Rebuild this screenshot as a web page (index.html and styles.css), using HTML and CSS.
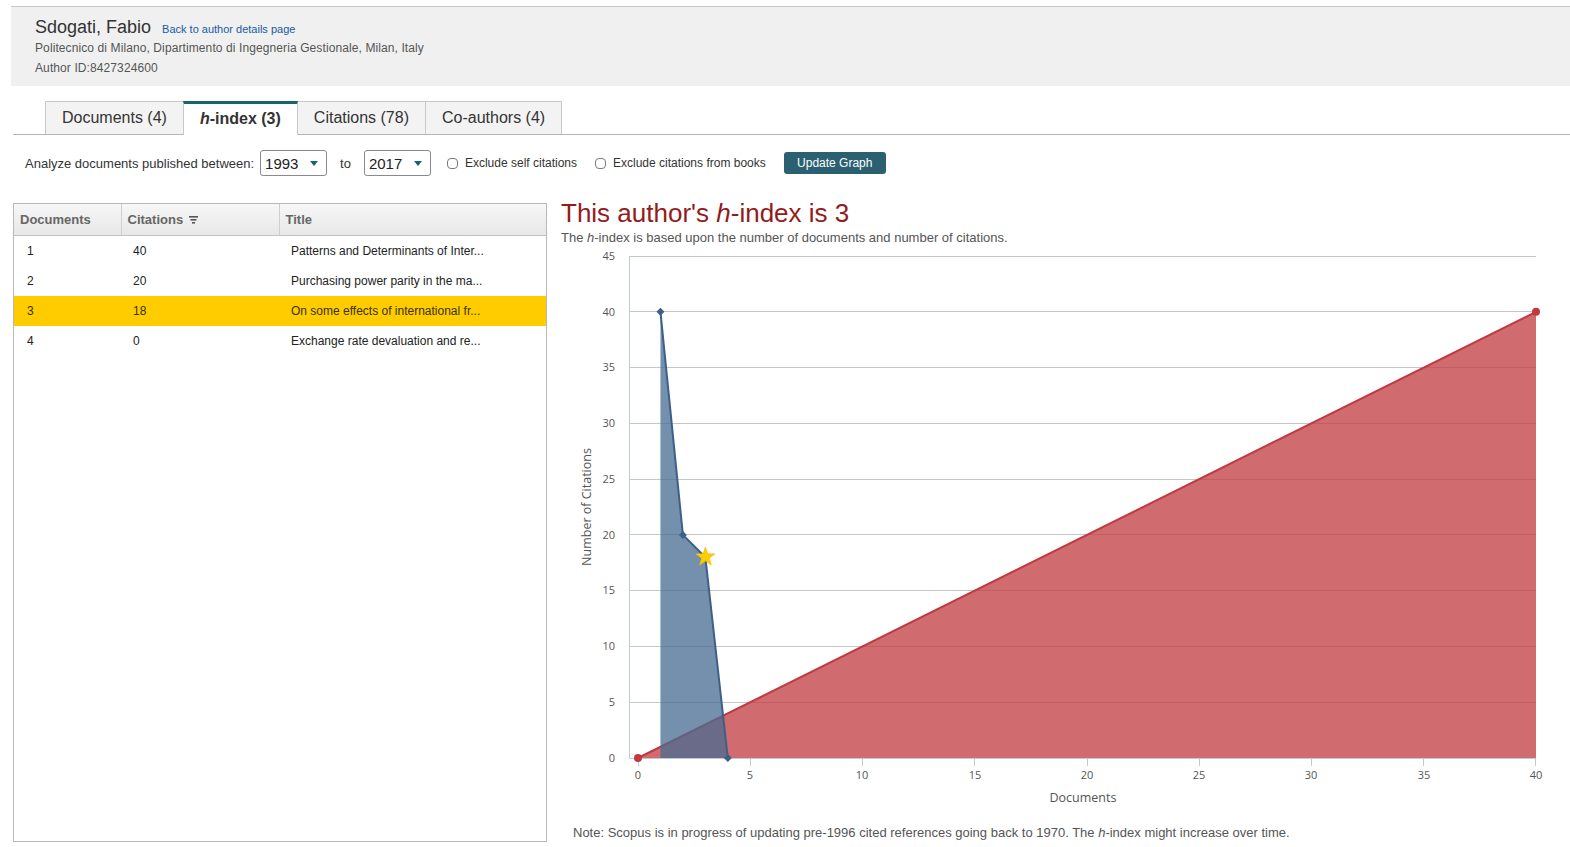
FILE: index.html
```html
<!DOCTYPE html>
<html lang="en">
<head>
  <meta charset="UTF-8">
  <title>Author h-index</title>
  <link rel="stylesheet" href="styles.css">
</head>
<body>
  <!-- Author header -->
  <div class="author-header">
    <div class="author-name">Sdogati, Fabio <a href="#" class="back-link">Back to author details page</a></div>
    <div class="author-line">Politecnico di Milano, Dipartimento di Ingegneria Gestionale, Milan, Italy</div>
    <div class="author-line">Author ID:8427324600</div>
  </div>

  <!-- Tabs -->
  <div class="tabs">
    <div class="tab">Documents (4)</div>
    <div class="tab active"><i>h</i>-index (3)</div>
    <div class="tab">Citations (78)</div>
    <div class="tab">Co-authors (4)</div>
  </div>

  <!-- Filters -->
  <div class="controls">
    <span class="ctl-label">Analyze documents published between:</span>
    <span class="year-select">1993<span class="caret"></span></span>
    <span class="ctl-to">to</span>
    <span class="year-select">2017<span class="caret"></span></span>
    <label class="check first"><input type="checkbox"> Exclude self citations</label>
    <label class="check"><input type="checkbox"> Exclude citations from books</label>
    <button class="update-btn">Update Graph</button>
  </div>

  <div class="main">
    <!-- Document list -->
    <div class="doc-panel">
      <table class="doc-table">
        <colgroup>
          <col class="col-doc">
          <col class="col-cit">
          <col>
        </colgroup>
        <thead>
          <tr>
            <th>Documents</th>
            <th>Citations <svg class="sort-icon" width="9" height="8" viewBox="0 0 9 8"><rect x="0" y="0" width="9" height="1.6" fill="#555"/><rect x="1.5" y="3" width="6" height="1.6" fill="#555"/><rect x="3" y="6" width="3" height="1.6" fill="#555"/></svg></th>
            <th>Title</th>
          </tr>
        </thead>
        <tbody>
          <tr><td>1</td><td>40</td><td>Patterns and Determinants of Inter...</td></tr>
          <tr><td>2</td><td>20</td><td>Purchasing power parity in the ma...</td></tr>
          <tr class="highlight"><td>3</td><td>18</td><td>On some effects of international fr...</td></tr>
          <tr><td>4</td><td>0</td><td>Exchange rate devaluation and re...</td></tr>
        </tbody>
      </table>
    </div>

    <!-- Graph -->
    <div class="graph-col">
      <h2 class="graph-title">This author's <i>h</i>-index is 3</h2>
      <p class="graph-sub">The <i>h</i>-index is based upon the number of documents and number of citations.</p>
      <svg class="chart" width="1012" height="565" viewBox="0 0 1012 565">
        <!-- grid -->
        <g stroke="#c6c6c6" stroke-width="1">
          <line x1="71" y1="10.5" x2="978" y2="10.5"/>
          <line x1="71" y1="65.5" x2="978" y2="65.5"/>
          <line x1="71" y1="121.5" x2="978" y2="121.5"/>
          <line x1="71" y1="177.5" x2="978" y2="177.5"/>
          <line x1="71" y1="233.5" x2="978" y2="233.5"/>
          <line x1="71" y1="288.5" x2="978" y2="288.5"/>
          <line x1="71" y1="344.5" x2="978" y2="344.5"/>
          <line x1="71" y1="400.5" x2="978" y2="400.5"/>
          <line x1="71" y1="456.5" x2="978" y2="456.5"/>
        </g>
        <line x1="71.5" y1="10" x2="71.5" y2="512" stroke="#c0cad6"/>
        <line x1="71" y1="512.5" x2="978" y2="512.5" stroke="#c0cad6"/>
        <g stroke="#c0cad6">
          <line x1="80.5" y1="512" x2="80.5" y2="520"/>
          <line x1="192.5" y1="512" x2="192.5" y2="520"/>
          <line x1="304.5" y1="512" x2="304.5" y2="520"/>
          <line x1="416.5" y1="512" x2="416.5" y2="520"/>
          <line x1="529.5" y1="512" x2="529.5" y2="520"/>
          <line x1="641.5" y1="512" x2="641.5" y2="520"/>
          <line x1="753.5" y1="512" x2="753.5" y2="520"/>
          <line x1="865.5" y1="512" x2="865.5" y2="520"/>
          <line x1="977.5" y1="512" x2="977.5" y2="520"/>
        </g>

        <!-- y labels -->
        <g class="tick" text-anchor="end">
          <text x="57" y="14">45</text>
          <text x="57" y="70">40</text>
          <text x="57" y="125">35</text>
          <text x="57" y="181">30</text>
          <text x="57" y="237">25</text>
          <text x="57" y="293">20</text>
          <text x="57" y="348">15</text>
          <text x="57" y="404">10</text>
          <text x="57" y="460">5</text>
          <text x="57" y="516">0</text>
        </g>
        <!-- x labels -->
        <g class="tick" text-anchor="middle">
          <text x="80" y="533">0</text>
          <text x="192" y="533">5</text>
          <text x="304" y="533">10</text>
          <text x="417" y="533">15</text>
          <text x="529" y="533">20</text>
          <text x="641" y="533">25</text>
          <text x="753" y="533">30</text>
          <text x="866" y="533">35</text>
          <text x="978" y="533">40</text>
        </g>
        <text class="axis-title" x="525" y="556" text-anchor="middle">Documents</text>
        <text class="axis-title" x="0" y="0" text-anchor="middle" transform="translate(33 261) rotate(-90)">Number of Citations</text>

        <!-- h-index reference line -->
        <polygon points="80,512 978,65.8 978,512" fill="#c0393f" fill-opacity="0.75"/>
        <line x1="80" y1="512" x2="978" y2="65.8" stroke="#c0393f" stroke-width="2"/>
        <circle cx="80" cy="512" r="4" fill="#c0393f"/>
        <circle cx="978" cy="65.8" r="4" fill="#c0393f"/>

        <!-- citations per document -->
        <polygon points="102.45,512 102.45,65.8 124.9,288.9 147.35,311.2 169.8,512" fill="#476b92" fill-opacity="0.75"/>
        <polyline points="102.45,65.8 124.9,288.9 147.35,311.2 169.8,512" fill="none" stroke="#3d5f88" stroke-width="2"/>
        <g fill="#3d5f88">
          <path d="M102.45,61.8 L106.45,65.8 L102.45,69.8 L98.45,65.8 Z"/>
          <path d="M124.9,284.9 L128.9,288.9 L124.9,292.9 L120.9,288.9 Z"/>
          <path d="M169.8,508 L173.8,512 L169.8,516 L165.8,512 Z"/>
        </g>
        <path d="M147.4,301 L149.75,307.76 L156.9,307.9 L151.2,312.24 L153.3,319.1 L147.4,315 L141.5,319.1 L143.6,312.24 L137.9,307.9 L145.05,307.76 Z" fill="#ffcc00" stroke="#f2b600" stroke-width="0.6"/>
      </svg>
      <p class="graph-note">Note: Scopus is in progress of updating pre-1996 cited references going back to 1970. The <i>h</i>-index might increase over time.</p>
    </div>
  </div>
</body>
</html>
```

FILE: styles.css
```css
/* General */
body {
  font-family: 'Liberation Sans', Arial, sans-serif;
  color: #333;
  background: #fff;
  margin: 0;
}

/* Author header */
.author-header {
  margin: 6px 0 0 11px;
  padding: 9px 24px 8px;
  background: #f0f0f0;
  border-top: 1px solid #c8c8c8;
}

.author-name {
  display: flex;
  align-items: baseline;
  height: 22px;
  font-size: 18px;
  line-height: 22px;
  color: #333;
}

.back-link {
  font-size: 11px;
  line-height: 11px;
  color: #1a5aa0;
  text-decoration: none;
  margin-left: 11px;
}

.author-line {
  font-size: 12px;
  line-height: 20px;
  color: #555;
  letter-spacing: 0.1px;
}

/* Tabs */
.tabs {
  display: flex;
  margin: 15px 0 0 13px;
  padding-left: 32px;
  border-bottom: 1px solid #b5b5b5;
  height: 33px;
}

.tab {
  height: 33px;
  box-sizing: border-box;
  padding: 0 16px;
  line-height: 31px;
  font-size: 16px;
  color: #333;
  background: #f3f3f3;
  border: 1px solid #c8c8c8;
  border-bottom: none;
  margin-right: -1px;
}

.tab.active {
  background: #fff;
  font-weight: bold;
  border-top: 3px solid #17646f;
  line-height: 29px;
  height: 34px;
  position: relative;
  z-index: 1;
}

/* Filter row */
.controls {
  display: flex;
  align-items: center;
  height: 26px;
  margin: 15px 0 0 25px;
  font-size: 13px;
  color: #333;
}

.year-select {
  display: inline-flex;
  align-items: center;
  justify-content: space-between;
  box-sizing: border-box;
  width: 67px;
  height: 26px;
  padding: 0 8px 0 4px;
  margin-left: 6px;
  border: 1px solid #8a8a8a;
  border-radius: 3px;
  font-size: 15px;
  color: #222;
}

.caret {
  width: 0;
  height: 0;
  border-left: 4px solid transparent;
  border-right: 4px solid transparent;
  border-top: 5px solid #17646f;
}

.ctl-to {
  margin: 0 7px 0 13px;
}

.check {
  display: inline-flex;
  align-items: center;
  margin-left: 18px;
  font-size: 12px;
}

.check.first {
  margin-left: 16px;
}

.check input {
  appearance: none;
  width: 11px;
  height: 11px;
  margin: 0 7px 0 0;
  border: 1px solid #7a7a7a;
  border-radius: 4px;
  background: #fff;
}

.update-btn {
  margin-left: 18px;
  width: 102px;
  height: 22px;
  padding: 0;
  border: none;
  border-radius: 3px;
  background: #2b6070;
  color: #fff;
  font-family: inherit;
  font-size: 12px;
}

/* Main area */
.main {
  display: flex;
  margin-top: 27px;
}

.doc-panel {
  margin-left: 13px;
  width: 534px;
  height: 639px;
  box-sizing: border-box;
  border: 1px solid #b8b8b8;
}

.doc-table {
  width: 100%;
  border-collapse: collapse;
  table-layout: fixed;
}

.col-doc {
  width: 107px;
}

.col-cit {
  width: 158px;
}

.doc-table th {
  height: 31px;
  padding: 0 6px;
  text-align: left;
  font-size: 13px;
  font-weight: bold;
  color: #666;
  background: linear-gradient(#f7f7f7, #e7e7e7);
  border-right: 1px solid #cfcfcf;
  border-bottom: 1px solid #c4c4c4;
}

.doc-table th:last-child {
  border-right: none;
}

.sort-icon {
  margin-left: 2px;
}

.doc-table td {
  height: 30px;
  padding: 0 12px;
  font-size: 12px;
  color: #222;
  white-space: nowrap;
  overflow: hidden;
}

.doc-table td:first-child {
  padding-left: 13px;
}

.doc-table tr.highlight td {
  background: #ffcc00;
  color: #3a3000;
}

/* Graph */
.graph-col {
  margin-left: 11px;
  width: 1012px;
}

.graph-title {
  margin: -3px 0 0 3px;
  font-size: 26px;
  line-height: 26px;
  font-weight: normal;
  color: #921c1c;
}

.graph-sub {
  margin: 4px 0 0 3px;
  font-size: 13px;
  line-height: 16px;
  color: #555;
}

.chart {
  display: block;
}

.tick {
  font-family: 'Open Sans', sans-serif;
  font-size: 11px;
  fill: #555;
}

.axis-title {
  font-family: 'Open Sans', sans-serif;
  font-size: 12.5px;
  fill: #555;
}

.graph-note {
  margin: 14px 0 0 15px;
  font-size: 13px;
  line-height: 16px;
  color: #555;
}
```
